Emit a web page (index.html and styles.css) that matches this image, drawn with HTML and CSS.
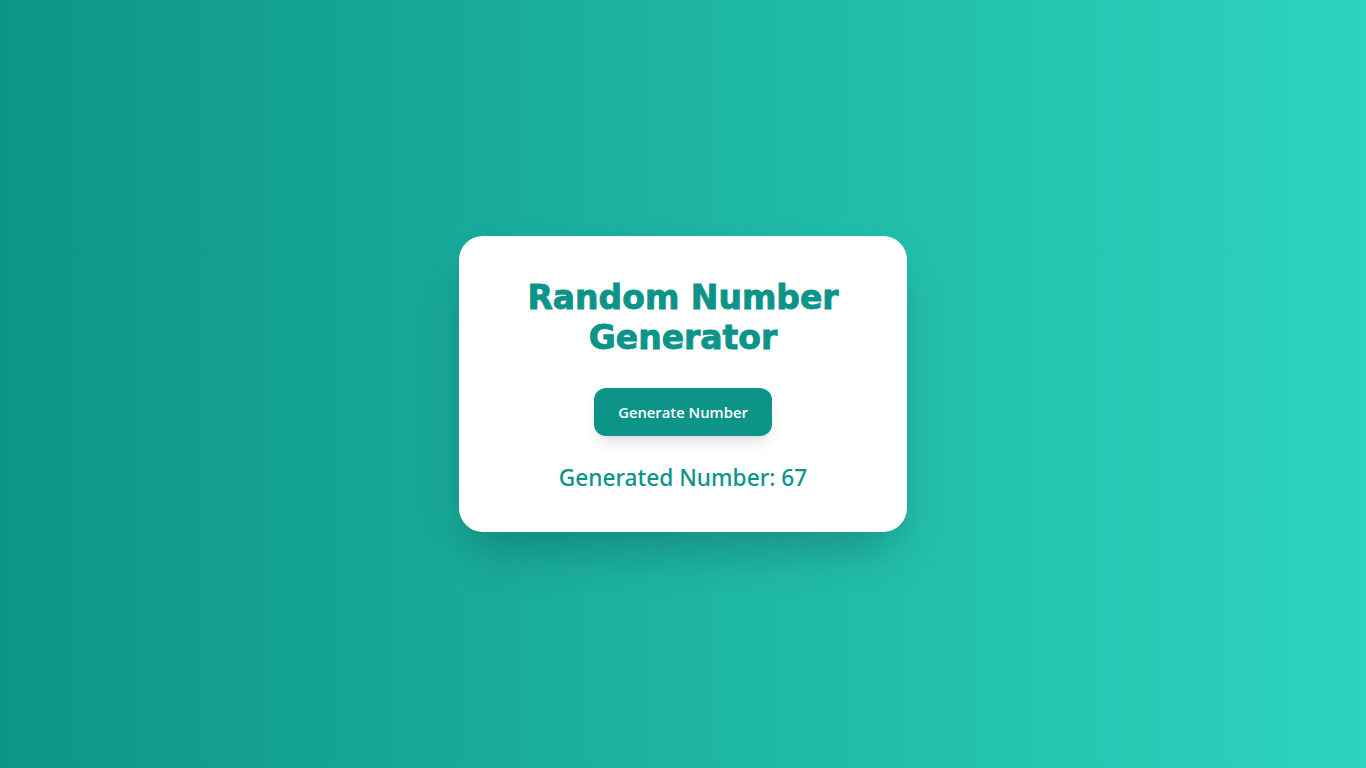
FILE: index.html
```html
<!DOCTYPE html>
<html lang="en">
<head>
<meta charset="UTF-8">
<title>Random Number Generator</title>
<link rel="stylesheet" href="styles.css">
</head>
<body>
<main class="card">
  <h1 class="title">Random Number Generator</h1>
  <button class="btn" type="button">Generate Number</button>
  <p class="result">Generated Number: 67</p>
</main>
</body>
</html>
```
FILE: styles.css
```css
* { box-sizing: border-box; }
html, body { height: 100%; }
body {
  margin: 0;
  min-height: 100vh;
  display: flex;
  align-items: center;
  justify-content: center;
  background: linear-gradient(to right, #0d9488, #2dd4bf);
  font-family: "Open Sans", "Noto Sans", sans-serif;
}
.card {
  width: 448px;
  background: #ffffff;
  border-radius: 24px;
  padding: 40px;
  display: flex;
  flex-direction: column;
  align-items: center;
  text-align: center;
  box-shadow: 0 25px 50px -12px rgba(0, 0, 0, 0.25);
}
.title {
  margin: 0 0 30px;
  padding-top: 2px;
  font-family: "DejaVu Sans", "Noto Sans", sans-serif;
  font-weight: 700;
  font-size: 33px;
  line-height: 40px;
  color: #0d9488;
  -webkit-text-stroke: 0.9px #0d9488;
}
.btn {
  height: 48px;
  padding: 0 24px;
  border: none;
  border-radius: 12px;
  background: #0d9488;
  color: #ffffff;
  font-family: "Open Sans", "Noto Sans", sans-serif;
  font-weight: 600;
  font-size: 14.8px;
  box-shadow: 0 10px 15px -3px rgba(0, 0, 0, 0.1), 0 4px 6px -4px rgba(0, 0, 0, 0.1);
  cursor: pointer;
}
.result {
  margin: 24px 0 0;
  padding-top: 4px;
  font-family: "Noto Sans", "Open Sans", sans-serif;
  font-size: 22.7px;
  line-height: 28px;
  font-weight: 500;
  color: #0d9488;
}
```
